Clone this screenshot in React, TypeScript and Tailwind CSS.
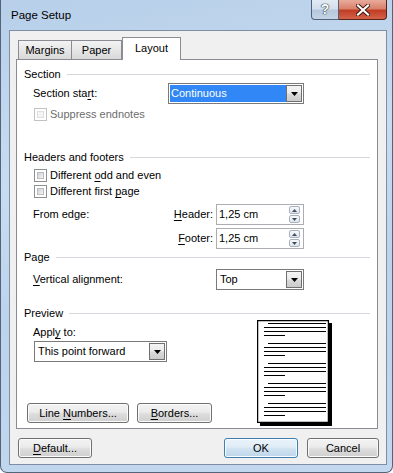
import type { ReactNode } from "react";

function U({ children }: { children: ReactNode }) {
	return <span className="underline underline-offset-[2px]">{children}</span>;
}

function GroupLabel({ text, className }: { text: string; className: string }) {
	return (
		<div className={`flex h-[15px] items-center gap-[6px] px-[7px] ${className}`}>
			<span>{text}</span>
			<div className="h-px flex-1 bg-[#d5d9dd]" />
		</div>
	);
}

function DownArrow() {
	return (
		<svg width="7" height="4" viewBox="0 0 7 4">
			<path d="M0 0h7L3.5 4z" fill="#000" />
		</svg>
	);
}

function Combo({
	value,
	className,
	selected,
}: {
	value: string;
	className: string;
	selected?: boolean;
}) {
	return (
		<div className={`flex h-[21px] border border-[#7a7a7a] bg-white p-px ${className}`}>
			<div
				className={`flex flex-1 items-center ${selected ? "bg-[#3087f5] pl-px text-white" : "pl-[2px]"}`}
			>
				{value}
			</div>
			<div className="flex w-[16px] items-center justify-center border border-[#707070] bg-[linear-gradient(#f4f4f4,#ebebeb_45%,#d9d9d9_55%,#cbcbcb)]">
				<DownArrow />
			</div>
		</div>
	);
}

function Spin({ value }: { value: string }) {
	return (
		<div className="flex h-[21px] w-[88px] items-center border border-[#abadb3] bg-white pl-[2px]">
			<span className="flex-1">{value}</span>
			<div className="mr-[3px] flex h-[17px] w-[11px] flex-col gap-px">
				<div className="flex flex-1 items-center justify-center rounded-[2px] border border-[#a9b2bf] bg-[linear-gradient(#f7f8f9,#dfe4ea)]">
					<svg width="5" height="3" viewBox="0 0 5 3">
						<path d="M2.5 0L5 3H0z" fill="#3e4d66" />
					</svg>
				</div>
				<div className="flex flex-1 items-center justify-center rounded-[2px] border border-[#a9b2bf] bg-[linear-gradient(#f7f8f9,#dfe4ea)]">
					<svg width="5" height="3" viewBox="0 0 5 3">
						<path d="M0 0h5L2.5 3z" fill="#3e4d66" />
					</svg>
				</div>
			</div>
		</div>
	);
}

function Check({ label, disabled }: { label: ReactNode; disabled?: boolean }) {
	return (
		<div className="flex h-[13px] items-center gap-[3px] pl-[17px]">
			<span
				className={`h-[13px] w-[13px] border bg-white p-[2px] ${disabled ? "border-[#c2c2c2]" : "border-[#8e8f8f]"}`}
			>
				<span
					className={`block h-full w-full border ${disabled ? "border-[#e0e0e0] bg-[#f4f4f4]" : "border-[#b9bdc2] bg-[linear-gradient(135deg,#cdd1d6,#f5f5f5)]"}`}
				/>
			</span>
			<span className={disabled ? "text-[#6d6d6d]" : ""}>{label}</span>
		</div>
	);
}

function Btn({
	children,
	className,
	primary,
}: {
	children: ReactNode;
	className: string;
	primary?: boolean;
}) {
	return (
		<button
			type="button"
			className={`flex h-[20px] items-center justify-center rounded-[3px] border shadow-[inset_0_0_0_1px_#fbfbfb] ${
				primary
					? "border-[#3c7fb1] bg-[linear-gradient(#eaf3fa,#e0ecf6_45%,#cfe2f1_55%,#bdd6ea)]"
					: "border-[#707070] bg-[linear-gradient(#f3f3f3,#ebebeb_45%,#dddddd_55%,#cfcfcf)]"
			} ${className}`}
		>
			<span>{children}</span>
		</button>
	);
}

function PreviewPage() {
	const groups = [0, 1, 2, 3, 4];
	return (
		<svg width="76" height="107" viewBox="0 0 76 107">
			<rect x="3" y="3" width="72" height="103" fill="#000" />
			<rect x="0.6" y="0.6" width="70.8" height="101.8" fill="#fff" stroke="#000" strokeWidth="1.3" />
			{groups.map((g) => {
				const y = 3.5 + g * 20;
				return (
					<g key={g} stroke="#000" strokeWidth="1.2">
						<line x1="11" y1={y} x2="69" y2={y} />
						<line x1="7" y1={y + 4} x2="69" y2={y + 4} />
						<line x1="7" y1={y + 8} x2="69" y2={y + 8} />
						<line x1="7" y1={y + 12} x2="28" y2={y + 12} />
					</g>
				);
			})}
		</svg>
	);
}

export default function App() {
	return (
		<div className="h-[473px] w-[393px] overflow-hidden rounded-b-[7px] border-x border-b border-[#53647a] bg-[linear-gradient(170deg,#b7cfe9_0%,#c8dcf1_35%,#bcd3ec_60%,#c3d8ee_100%)] font-['Liberation_Sans',Arial,sans-serif] text-[11px] leading-[15px] text-black">
			<div className="flex h-[30px]">
				<div className="pl-[10px] pt-[8px] text-[11.5px]">Page Setup</div>
				<div className="ml-auto mr-[5px] flex h-[20px]">
					<div className="flex w-[28px] items-center justify-center rounded-bl-[4px] border border-t-0 border-[#4f6179] bg-[linear-gradient(#e2eaf4,#d3dfec_45%,#b7c8dc_55%,#c4d4e6)] text-[14px] font-bold text-white [text-shadow:0_0_1px_#1e2b3c,0_0_1px_#1e2b3c,0_0_1px_#1e2b3c]">
						?
					</div>
					<div className="flex w-[48px] items-center justify-center rounded-br-[4px] border border-l-0 border-t-0 border-[#5b2318] bg-[linear-gradient(#e9ab9c,#d9816b_45%,#c13d25_55%,#d3624a)]">
						<svg width="14" height="12" viewBox="0 0 14 12">
							<path d="M2 1.5l10 9M12 1.5l-10 9" stroke="#3d1510" strokeWidth="4" strokeLinecap="square" />
							<path d="M2 1.5l10 9M12 1.5l-10 9" stroke="#fff" strokeWidth="2.2" strokeLinecap="square" />
						</svg>
					</div>
				</div>
			</div>
			<div className="ml-[8px] h-[435px] w-[378px] border border-[#7f8ea3] bg-[#f0f0f0]">
				<div className="mt-[6px] flex h-[22px] items-end pl-[8px]">
					<div className="flex h-[19px] w-[54px] items-center justify-center border border-b-0 border-[#898c95] bg-[linear-gradient(#f3f3f3,#e6e6e6_50%,#d9d9d9)] pt-px">
						Margins
					</div>
					<div className="flex h-[19px] w-[50px] items-center justify-center border border-b-0 border-l-0 border-[#898c95] bg-[linear-gradient(#f3f3f3,#e6e6e6_50%,#d9d9d9)] pt-px">
						Paper
					</div>
					<div className="relative z-10 -mb-px flex h-[23px] w-[59px] items-start justify-center border border-b-0 border-[#898c95] bg-white pt-[3px]">
						Layout
					</div>
				</div>
				<div className="ml-[6px] flex h-[370px] w-[362px] flex-col border border-[#898c95] bg-white">
					<GroupLabel text="Section" className="mt-[7px]" />
					<div className="mt-px flex items-center pl-[16px]">
						<span className="w-[135px]">
							Section sta<U>r</U>t:
						</span>
						<Combo value="Continuous" className="w-[136px]" selected />
					</div>
					<div className="mt-[4px]">
						<Check label="Suppress endnotes" disabled />
					</div>
					<GroupLabel text="Headers and footers" className="mt-[29px]" />
					<div className="mt-[4px]">
						<Check
							label={
								<>
									Different <U>o</U>dd and even
								</>
							}
						/>
					</div>
					<div className="mt-[3px]">
						<Check
							label={
								<>
									Different first <U>p</U>age
								</>
							}
						/>
					</div>
					<div className="mt-[6px] flex items-center pl-[16px]">
						<span className="w-[140px]">From edge:</span>
						<span className="w-[40px] text-right">
							<U>H</U>eader:
						</span>
						<span className="ml-[3px]">
							<Spin value="1,25 cm" />
						</span>
					</div>
					<div className="mt-[3px] flex items-center pl-[16px]">
						<span className="w-[180px] text-right">
							<U>F</U>ooter:
						</span>
						<span className="ml-[3px]">
							<Spin value="1,25 cm" />
						</span>
					</div>
					<GroupLabel text="Page" className="mt-px" />
					<div className="mt-[4px] flex items-center pl-[16px]">
						<span className="w-[183px]">
							<U>V</U>ertical alignment:
						</span>
						<Combo value="Top" className="w-[88px]" />
					</div>
					<GroupLabel text="Preview" className="mt-[16px]" />
					<div className="-mt-px flex">
						<div className="flex w-[240px] flex-col">
							<span className="ml-[16px] mt-[5px]">
								Appl<U>y</U> to:
							</span>
							<Combo value="This point forward" className="ml-[17px] mt-px w-[133px]" />
							<div className="ml-[10px] mt-[41px] flex gap-[8px]">
								<Btn className="w-[102px]">
									Line <U>N</U>umbers...
								</Btn>
								<Btn className="w-[75px]">
									<U>B</U>orders...
								</Btn>
							</div>
						</div>
						<PreviewPage />
					</div>
				</div>
				<div className="mt-[9px] flex pl-[8px]">
					<Btn className="w-[74px]">
						<U>D</U>efault...
					</Btn>
					<Btn className="ml-[132px] w-[74px]" primary>
						OK
					</Btn>
					<Btn className="ml-[9px] w-[72px]">Cancel</Btn>
				</div>
			</div>
		</div>
	);
}
